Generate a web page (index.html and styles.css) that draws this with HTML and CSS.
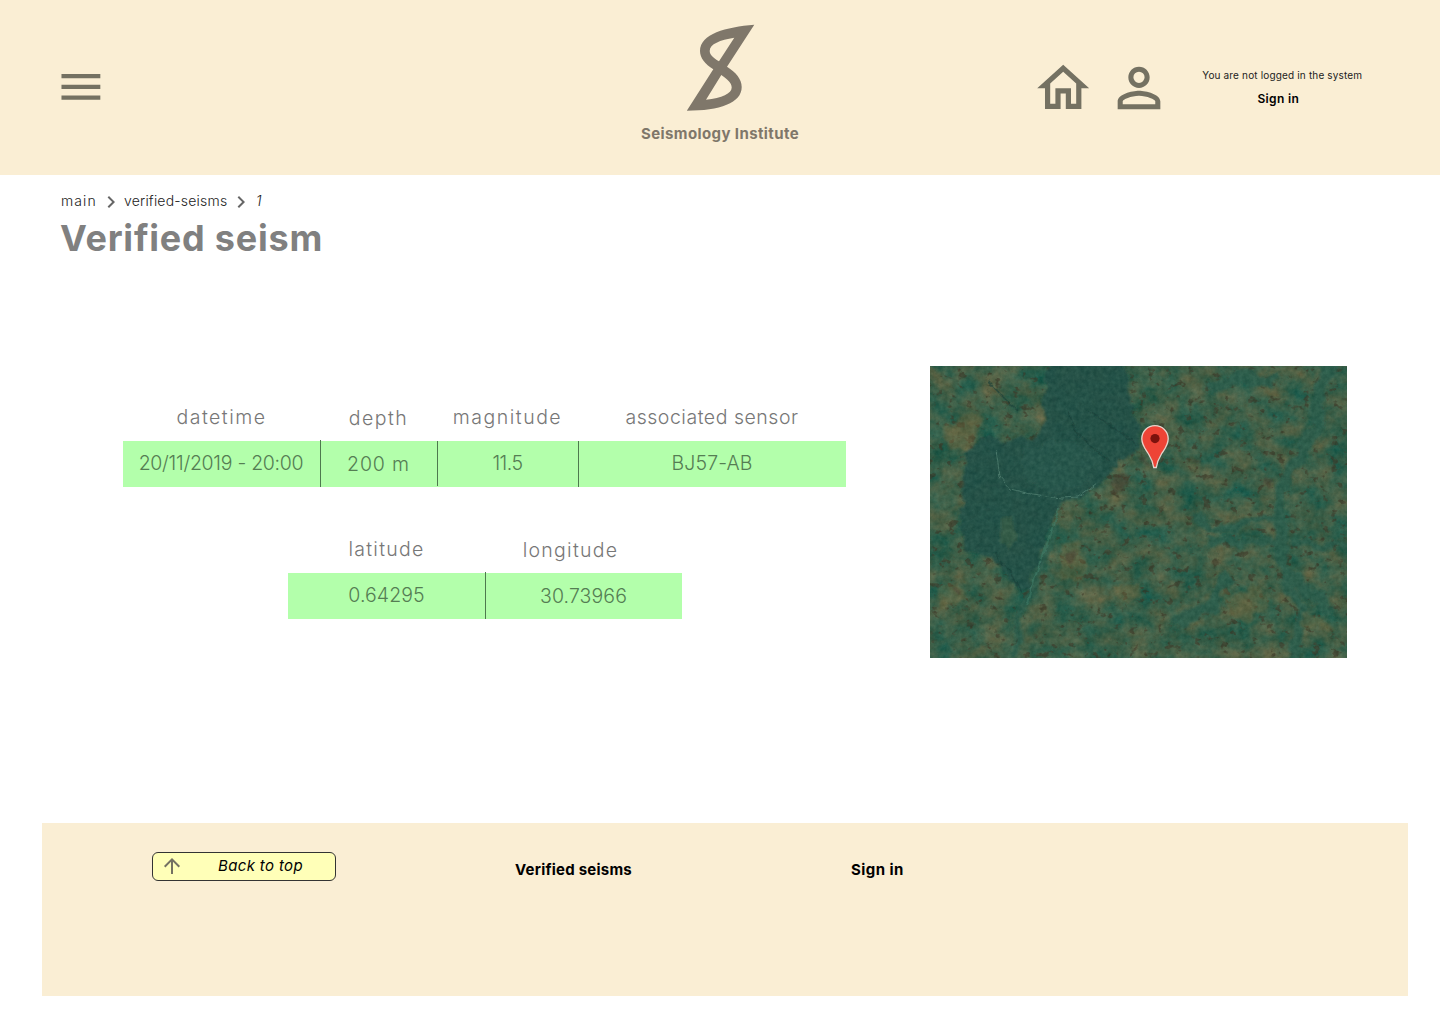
FILE: index.html
```html
<!DOCTYPE html>
<html lang="en">
<head>
<meta charset="utf-8">
<title>Verified seism – Seismology Institute</title>
<link rel="stylesheet" href="styles.css">
</head>
<body>
<header class="header">
  <a class="menu"><svg class="menu-icon" viewBox="0 0 24 24"><path d="M3 18h18v-2H3v2zm0-5h18v-2H3v2zm0-7v2h18V6H3z"/></svg></a>
  <div class="brand">
    <svg class="logo" viewBox="0 0 70 88"><path fill-rule="evenodd" d="M68.3 .8C40 3 14 10 14 27C14 34 19 40 27.3 45.3L.8 86.7C34 86.7 55.7 79 55.7 63C55.7 55 50 48.5 41 42.7ZM48.3 13.7C34 16 23.7 20 23.7 27C23.7 31 28 34.5 33 37.2ZM35.3 51C41 55 45.7 58.5 45.7 63.5C45.7 69.5 36 74 20 75.7Z"/></svg>
    <span class="brand-name">Seismology Institute</span>
  </div>
  <nav class="tools">
    <svg class="home" viewBox="0 0 24 24"><path d="M12 5.69l5 4.5V18h-2v-6H9v6H7v-7.81l5-4.5M12 3L2 12h3v8h6v-6h2v6h6v-8h3L12 3z"/></svg>
    <svg class="person" viewBox="0 0 24 24"><path d="M12 5.9a2.1 2.1 0 1 1 0 4.2 2.1 2.1 0 0 1 0-4.2m0 9c2.97 0 6.1 1.46 6.1 2.1v1.1H5.9V17c0-.64 3.13-2.1 6.1-2.1M12 4C9.79 4 8 5.79 8 8s1.79 4 4 4 4-1.79 4-4-1.79-4-4-4zm0 9c-2.67 0-8 1.34-8 4v3h16v-3c0-2.66-5.33-4-8-4z"/></svg>
    <div class="account"><span class="status">You are not logged in the system</span><a class="signin">Sign in</a></div>
  </nav>
</header>
<main>
  <nav class="crumbs">
    <a class="crumb-main">main</a>
    <svg class="chevron" viewBox="8 0 8 24"><path d="M10 6L8.59 7.41 13.17 12l-4.58 4.59L10 18l6-6z"/></svg>
    <a class="crumb-list">verified-seisms</a>
    <svg class="chevron" viewBox="8 0 8 24"><path d="M10 6L8.59 7.41 13.17 12l-4.58 4.59L10 18l6-6z"/></svg>
    <em class="crumb-id">1</em>
  </nav>
  <h1 class="title">Verified seism</h1>
  <section class="content">
    <div class="tables">
      <dl class="table measure">
        <div class="cell"><dt>datetime</dt><dd class="date">20/11/2019 - 20:00</dd></div>
        <div class="cell low tall"><dt>depth</dt><dd class="depth">200 m</dd></div>
        <div class="cell short"><dt>magnitude</dt><dd class="magnitude">11.5</dd></div>
        <div class="cell"><dt class="sensor">associated sensor</dt><dd>BJ57-AB</dd></div>
      </dl>
      <dl class="table position">
        <div class="cell"><dt class="lat">latitude</dt><dd>0.64295</dd></div>
        <div class="cell low tall"><dt class="lng">longitude</dt><dd>30.73966</dd></div>
      </dl>
    </div>
    <svg class="map" viewBox="0 0 417 292">
      <defs>
        <filter id="land" x="0" y="0" width="100%" height="100%" color-interpolation-filters="sRGB">
          <feTurbulence type="fractalNoise" baseFrequency=".04 .05" numOctaves="6" seed="12"/>
          <feColorMatrix values=".46 0 0 0 .01  .1 .08 0 0 .285  0 .1 0 0 .235  0 0 0 0 1"/>
        </filter>
        <filter id="grain" x="0" y="0" width="100%" height="100%" color-interpolation-filters="sRGB">
          <feTurbulence type="fractalNoise" baseFrequency=".22" numOctaves="3" seed="4"/>
          <feColorMatrix values=".8 0 0 0 -.15  .8 0 0 0 -.03  .7 0 0 0 -.08  0 0 0 0 .13"/>
        </filter>
        <filter id="specks" x="0" y="0" width="100%" height="100%" color-interpolation-filters="sRGB">
          <feTurbulence type="fractalNoise" baseFrequency=".11 .13" numOctaves="3" seed="31"/>
          <feColorMatrix values="0 0 0 0 .24  0 0 0 0 .2  0 0 0 0 .14  9 0 0 0 -5.6"/>
        </filter>
        <filter id="edge" x="-10%" y="-10%" width="120%" height="120%">
          <feTurbulence type="fractalNoise" baseFrequency=".06" numOctaves="4" seed="7"/>
          <feDisplacementMap in="SourceGraphic" scale="16" xChannelSelector="R" yChannelSelector="G"/>
          <feGaussianBlur stdDeviation="1.3"/>
        </filter>
        <filter id="line" x="-5%" y="-5%" width="110%" height="110%">
          <feTurbulence type="fractalNoise" baseFrequency=".12" numOctaves="2" seed="3"/>
          <feDisplacementMap in="SourceGraphic" scale="6" xChannelSelector="R" yChannelSelector="G"/>
        </filter>
      </defs>
      <rect width="417" height="292" filter="url(#land)"/>
      <rect width="417" height="292" filter="url(#specks)" opacity=".6"/>
      <g filter="url(#edge)" color-interpolation-filters="sRGB">
        <path fill="#204f46" opacity=".92" d="M122-8H196L201 35L209 62L207 90L187 97L165 122L148 133L130 136L118 165L108 201L96 226L80 215L63 191L34 183L30 160L37 87L50 73L102 73L116 55L112 30Z"/>
        <path fill="#285a51" opacity=".5" d="M90 85L130 72L175 88L150 122L125 128L98 116Z"/>
        <path fill="#3c6149" opacity=".7" d="M72 156L80 148L87 174L79 184L72 176Z"/>
        <g fill="none" stroke="#285c4d" opacity=".9">
          <path stroke-width="11" d="M402-6L389 26L386 62L373 84L355 112L349 142L352 190L359 222L374 245L362 300"/>
          <path stroke-width="8" d="M350 148L310 160L278 164L265 145M350 175L278 177M360 175L425 182"/>
          <path stroke-width="13" d="M360 210L382 226L400 248M280 25L310 10L345 17M245 256L280 242L300 210"/>
          <path stroke-width="6" d="M85 292L88 255L98 232L112 198L128 160"/>
        </g>
        <g fill="#806b40" opacity=".35">
          <path d="M290 230L330 220L338 236L320 260L300 244Z"/>
          <path d="M132 180L145 174L160 202L150 216L130 212Z"/>
          <path d="M182 225L207 216L212 232L196 238Z"/>
          <path d="M373 245L402 260L398 268L374 256Z"/>
          <path d="M0 225L32 215L38 232L12 240ZM14 62L40 45L55 52L38 84L22 86Z"/>
        </g>
        <g fill="#4c3a28" opacity=".5">
          <path d="M178 118L190 106L200 118L196 130L182 128ZM338 108L345 114L340 122L332 118ZM210 92L217 90L218 100L212 98ZM264 92L272 91L271 98ZM137 186L146 182L147 192L140 196ZM24 222L32 220L30 229Z"/>
        </g>
      </g>
      <g fill="none" filter="url(#line)">
        <path stroke="#5f9183" stroke-width=".9" opacity=".7" d="M66 84L70 111L80 123L102 128L132 132L148 131L166 118"/>
        <path stroke="#143d38" stroke-width="1.6" opacity=".6" d="M138 47L147 67L164 82L179 95M158 44L180 58L207 80M65 187L80 207L92 226M58 15L72 30L88 45"/>
        <path stroke="#3d7f6b" stroke-width="2" opacity=".6" d="M130 142L118 176L106 208L96 240"/>
      </g>
      <rect width="417" height="292" filter="url(#grain)"/>
      <path fill="#ee4436" stroke="#e6d5cc" stroke-width="1.3" d="M225 59.6C217.5 59.6 211.8 65.5 211.8 72.7C211.8 79 215.5 83.2 218.8 88.5C221.8 93.3 223.1 96.5 223.7 101.5H226.3C226.9 96.5 228.2 93.3 231.2 88.5C234.5 83.2 238.2 79 238.2 72.7C238.2 65.5 232.5 59.6 225 59.6Z"/>
      <circle cx="225" cy="72.6" r="4.6" fill="#7c120d"/>
    </svg>
  </section>
</main>
<footer class="footer">
  <a class="top"><svg class="arrow" viewBox="0 0 24 24"><path d="M4 12l1.41 1.41L11 7.83V20h2V7.83l5.58 5.59L20 12l-8-8-8 8z"/></svg><em class="top-text">Back to top</em></a>
  <a class="link">Verified seisms</a>
  <a class="link link-signin">Sign in</a>
</footer>
</body>
</html>
```
FILE: styles.css
```css
* { box-sizing: border-box; }
body { margin: 0; width: 1440px; height: 1024px; overflow: hidden; background: #fff; color: #000; font-family: Inter, sans-serif; }
svg { display: block; flex: none; }
a, span, em, dt, dd { white-space: nowrap; }

.header { display: grid; grid-template-columns: 1fr 160px 1fr; height: 175px; background: #faeed4; }
.menu { padding: 61px 0 0 54.5px; fill: #747162; }
.menu-icon { width: 51.8px; height: 51.8px; }
.brand { display: flex; flex-direction: column; align-items: center; padding-top: 24px; }
.logo { width: 70px; height: 88px; margin-left: 2px; fill: #7f776a; }
.brand-name { margin-top: 12px; font-size: 15px; line-height: 20px; font-weight: 700; letter-spacing: .4px; color: #7f776a; }
.tools { display: flex; justify-content: flex-end; align-items: flex-start; padding: 56px 77.5px 0 0; fill: #747162; }
.home { width: 62.4px; height: 62.4px; margin: 1px 12.7px 0 0; }
.person { width: 64px; height: 64px; margin: -.5px 30.8px 0 0; }
.account { display: flex; flex-direction: column; width: 160.5px; align-items: center; padding-top: 11px; }
.status { font-size: 10px; line-height: 16px; letter-spacing: .16px; color: #222; }
.signin { margin: 7px 8px 0 0; font-size: 12px; line-height: 18px; font-weight: 600; letter-spacing: .35px; }

.crumbs { display: flex; height: 24px; margin: 15px 0 0 61px; font-size: 14px; line-height: 22px; font-weight: 300; color: #222; }
.chevron { width: 8px; height: 24px; fill: #666; margin: 0 9px 0 10px; }
.crumb-main { width: 36px; letter-spacing: 1.1px; }
.crumb-list { width: 103px; letter-spacing: .2px; }
.crumb-id { margin-left: 2px; }
.title { margin: 2px 0 0 60px; font-size: 36px; line-height: 44px; font-weight: 700; letter-spacing: .77px; color: #808080; }
.content { display: flex; justify-content: space-between; margin-top: 106px; padding: 0 93px 0 123px; height: 292px; }
.tables { display: flex; flex-direction: column; gap: 40px; padding-top: 29px; }
.table { display: grid; margin: 0; font-size: 19.5px; line-height: 44px; font-weight: 300; text-align: center; color: #777; }
.measure { grid-template-columns: 197px 117px 141px 268px; }
.position { grid-template-columns: 197px 197px; margin-left: 165px; width: 394px; }
.table dt, .table dd { height: 46px; margin: 0; }
.table dt { letter-spacing: 1.5px; }
.table dt.sensor { letter-spacing: .52px; }
.table dt.lat, .table dt.lng { letter-spacing: 1.25px; }
.table dd { background: #b3ffab; color: #557d53; letter-spacing: .1px; }
.table dd.date { padding-right: 1px; letter-spacing: -.28px; }
.table dd.depth { letter-spacing: .85px; }
.table dd.magnitude { letter-spacing: -.5px; }
.cell + .cell dd { background-image: linear-gradient(#4e794e, #4e794e); background-size: 1px 100%; background-repeat: no-repeat; }
.low dt, .low dd { padding-top: 1px; }
.tall dt { background: linear-gradient(#4e794e, #4e794e) 0 100% / 1px 1px no-repeat; }
.measure .short dd { background-size: 1px 45px; }
.lng { padding-right: 26px; }
.map { width: 417px; height: 292px; }

.footer { display: grid; grid-template-columns: 363px 336px 1fr; align-items: start; width: 1366px; height: 173px; margin: 165px 0 0 42px; padding: 29px 0 0 110px; background: #faeed4; }
.top { display: flex; width: 184px; height: 29px; border: 1px solid #333; border-radius: 6px; background: #ffffb8; }
.arrow { width: 24px; height: 24px; margin: 1px 0 0 7px; fill: #747162; }
.top-text { margin-left: 34px; font-size: 15px; line-height: 26px; letter-spacing: .36px; }
.link { padding-top: 6px; font-size: 15px; line-height: 24px; font-weight: 700; letter-spacing: .23px; }
.link-signin { letter-spacing: .45px; }
```
